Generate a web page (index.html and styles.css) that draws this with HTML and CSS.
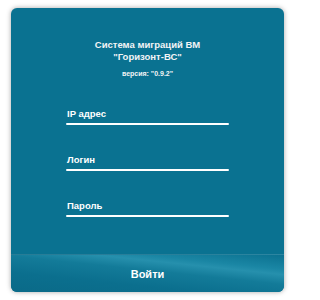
FILE: index.html
```html
<!DOCTYPE html>
<html lang="ru">
<head>
<meta charset="utf-8">
<title>Система миграций ВМ</title>
<link rel="stylesheet" href="styles.css">
</head>
<body>
<div class="card">
  <div class="title">Система миграций ВМ<br>"Горизонт-ВС"</div>
  <div class="version">версия: "0.9.2"</div>
  <form class="form">
    <label class="field">
      <span class="label">IP адрес</span>
      <span class="line"></span>
    </label>
    <label class="field">
      <span class="label">Логин</span>
      <span class="line"></span>
    </label>
    <label class="field">
      <span class="label">Пароль</span>
      <span class="line"></span>
    </label>
  </form>
  <div class="button">Войти</div>
</div>
</body>
</html>
```
FILE: styles.css
```css
html, body {
  margin: 0;
  padding: 0;
  background: #ffffff;
}
body {
  padding: 8px 8px 8px 11px;
  font-family: "Liberation Sans", Arial, sans-serif;
}
.card {
  width: 273px;
  height: 284px;
  background: #0a7291;
  border-radius: 6px;
  box-shadow: 0 0 5px rgba(0, 0, 0, 0.35);
  display: flex;
  flex-direction: column;
  align-items: center;
  overflow: hidden;
  color: #f2f4f6;
}
.title {
  margin-top: 31px;
  font-size: 9.5px;
  font-weight: bold;
  line-height: 12px;
  text-align: center;
}
.version {
  margin-top: 6px;
  font-size: 7px;
  font-weight: bold;
  line-height: 10px;
}
.form {
  margin: 29px 0 0;
  width: 163px;
  display: flex;
  flex-direction: column;
  gap: 29px;
}
.field {
  display: flex;
  flex-direction: column;
}
.label {
  font-size: 9.5px;
  font-weight: bold;
  line-height: 12px;
  padding-left: 1px;
  color: #ffffff;
}
.line {
  margin-top: 3px;
  height: 2px;
  background: #ffffff;
  border-radius: 1px;
  box-shadow: 0 4px 5px -1px rgba(0, 30, 50, 0.35);
}
.button {
  margin-top: auto;
  align-self: stretch;
  height: 37px;
  display: flex;
  align-items: center;
  justify-content: center;
  font-size: 11px;
  font-weight: bold;
  color: #ffffff;
  border-top: 1px solid rgba(255, 255, 255, 0.12);
  background: linear-gradient(186deg, #0b7190 0%, #1a86a4 22%, #2690ad 30%, #137b99 45%, #0b6f8e 70%, #0a6a88 100%);
}
```
